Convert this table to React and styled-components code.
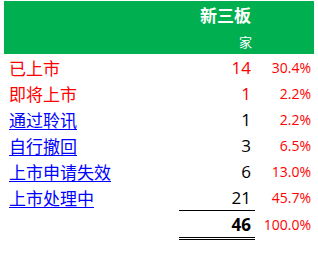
import React from 'react';
import styled, { createGlobalStyle } from 'styled-components';

const GlobalStyle = createGlobalStyle`
    body {
        margin: 0;
        background: #ffffff;
    }
`;

const Sheet = styled.div`
    display: grid;
    grid-template-columns: 175px 76px 59px;
    margin: 1px 0 0 4px;
    font-family: "Open Sans", "Noto Sans CJK SC", sans-serif;
`;

const HeadCell = styled.div`
    grid-column: ${(p) => p.span || 'auto'};
    height: ${(p) => p.h || 27}px;
    background: #00b050;
    color: #ffffff;
    display: flex;
    align-items: center;
    justify-content: flex-end;
    padding-right: ${(p) => p.pr || 0}px;
    font-family: "Noto Sans CJK SC", sans-serif;
    font-size: ${(p) => p.size || 13}px;
    font-weight: ${(p) => (p.bold ? 700 : 400)};
`;

const Label = styled.div`
    height: 26px;
    display: flex;
    align-items: center;
    padding-left: 5px;
    font-family: "Noto Sans CJK SC", sans-serif;
    font-size: 17px;
    line-height: 1;
    color: ${(p) => (p.link ? '#0000ff' : '#ff0000')};
    text-decoration: ${(p) => (p.link ? 'underline' : 'none')};
    text-underline-offset: 2px;
`;

const Num = styled.div`
    height: 26px;
    display: flex;
    align-items: center;
    justify-content: flex-end;
    padding-right: 4px;
    font-size: 17px;
    font-weight: ${(p) => (p.bold ? 700 : 400)};
    color: ${(p) => (p.red ? '#ff0000' : '#000000')};
    border-top: ${(p) => (p.total ? '1px solid #000' : 'none')};
    border-bottom: ${(p) => (p.total ? '3px double #000' : 'none')};
`;

const Pct = styled.div`
    height: 26px;
    display: flex;
    align-items: center;
    justify-content: flex-end;
    padding-right: 3px;
    font-size: 14px;
    color: #ff0000;
    padding-top: ${(p) => (p.total ? 1 : 0)}px;
`;

const rows = [
    { label: '已上市', n: 14, pct: '30.4%', red: true },
    { label: '即将上市', n: 1, pct: '2.2%', red: true },
    { label: '通过聆讯', n: 1, pct: '2.2%', link: true },
    { label: '自行撤回', n: 3, pct: '6.5%', link: true },
    { label: '上市申请失效', n: 6, pct: '13.0%', link: true },
    { label: '上市处理中', n: 21, pct: '45.7%', link: true }
];

export default function App() {
    return (
        <>
            <GlobalStyle />
            <Sheet>
                <HeadCell />
                <HeadCell size={17} bold pr={4}>新三板</HeadCell>
                <HeadCell />
                <HeadCell h={26} />
                <HeadCell h={26} size={13} pr={3}>家</HeadCell>
                <HeadCell h={26} />
                {rows.map((r) => (
                    <React.Fragment key={r.label}>
                        <Label link={r.link}>{r.label}</Label>
                        <Num red={r.red}>{r.n}</Num>
                        <Pct>{r.pct}</Pct>
                    </React.Fragment>
                ))}
                <div />
                <Num total bold>46</Num>
                <Pct total>100.0%</Pct>
            </Sheet>
        </>
    );
}
